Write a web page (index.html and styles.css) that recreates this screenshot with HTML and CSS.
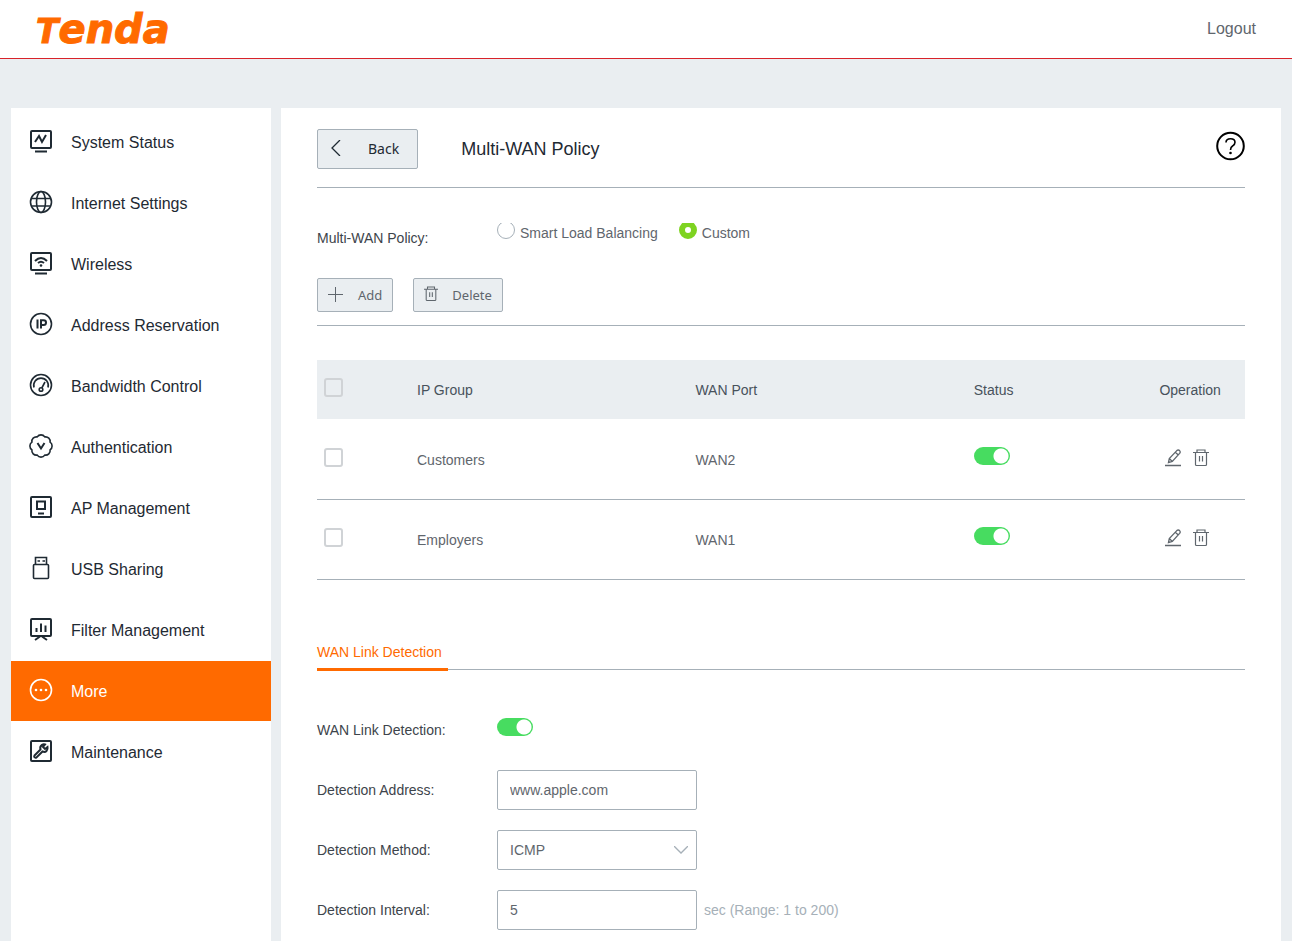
FILE: index.html
```
<!DOCTYPE html>
<html lang="en">
<head>
    <meta charset="UTF-8">
    <meta name="viewport" content="width=device-width, initial-scale=1.0">
    <title>Tenda</title>
    <link rel="stylesheet" href="styles.css">
</head>
<body>
    <!-- shared row icons -->
    <svg class="sprite" aria-hidden="true">
        <symbol id="trash" viewBox="0 0 16 18">
            <path d="M0 3.5H16M4 3.5V1H12V3.5M2.5 3.5V15.5Q2.5 16.5 3.5 16.5H12.5Q13.5 16.5 13.5 15.5V3.5M6.5 7V12.5M9.5 7V12.5" fill="none" stroke="currentColor" stroke-width="1.2"/>
        </symbol>
        <symbol id="edit" viewBox="0 0 16 18">
            <path d="M0 16.5H16M3.5 13.5L4.3 9.6L11.8 1.6Q13.2 .4 14.6 1.6Q15.8 3 14.6 4.4L7.3 12.4ZM10.4 3.2L13 5.8M4.3 9.6L7.3 12.4" fill="none" stroke="currentColor" stroke-width="1.3"/>
        </symbol>
    </svg>

    <header class="topbar">
        <a href="#" class="logo"><span class="logo-cap">T</span>enda</a>
        <a href="#" class="logout">Logout</a>
    </header>

    <div class="main">
        <nav class="sidebar">
            <a href="#" class="item">
                <svg viewBox="0 0 24 24"><rect x="2" y="2" width="20" height="17" rx="1"/><path d="M6 22.5H18M6 13L10 7L13 13L17 6"/></svg>
                System Status
            </a>
            <a href="#" class="item">
                <svg viewBox="0 0 24 24" class="thin"><circle cx="12" cy="12" r="10.5"/><ellipse cx="12" cy="12" rx="4.5" ry="10.5"/><path d="M2.5 8.5H21.5M2.5 16H21.5"/></svg>
                Internet Settings
            </a>
            <a href="#" class="item">
                <svg viewBox="0 0 24 24"><rect x="2" y="2" width="20" height="17" rx="1"/><path d="M6 22.5H18M6 10Q12 4 18 10M9 12Q12 9.5 15 12"/><circle cx="12" cy="14.5" r="1.3" class="dot"/></svg>
                Wireless
            </a>
            <a href="#" class="item">
                <svg viewBox="0 0 24 24"><circle cx="12" cy="12" r="10.5" class="thin"/><path d="M8.5 7.5V16.5M12 16.5V8.3H14.5Q17 8.3 17 10.5Q17 13 14.5 13H12"/></svg>
                Address Reservation
            </a>
            <a href="#" class="item">
                <svg viewBox="0 0 24 24" class="thin"><circle cx="12" cy="12" r="10.5"/><path d="M5 14.5A7.3 7.3 0 1 1 19 14.5M16 9L12.8 15"/><circle cx="12" cy="16.5" r="1.8"/></svg>
                Bandwidth Control
            </a>
            <a href="#" class="item">
                <svg viewBox="0 0 24 24" class="thin"><path d="M8.2 2.9A4.6 4.6 0 0 1 15.8 2.9A4.6 4.6 0 0 1 21.1 8.2A4.6 4.6 0 0 1 21.1 15.8A4.6 4.6 0 0 1 15.8 21.1A4.6 4.6 0 0 1 8.2 21.1A4.6 4.6 0 0 1 2.9 15.8A4.6 4.6 0 0 1 2.9 8.2A4.6 4.6 0 0 1 8.2 2.9Z"/><path d="M8.5 9L12 14.5L15.5 9" class="bold"/></svg>
                Authentication
            </a>
            <a href="#" class="item">
                <svg viewBox="0 0 24 24"><rect x="2" y="2" width="20" height="20" rx="1"/><rect x="8" y="6.5" width="8" height="7.5"/><path d="M9 18.5H15"/></svg>
                AP Management
            </a>
            <a href="#" class="item">
                <svg viewBox="0 0 24 24" class="thin"><rect x="4.5" y="8.5" width="15" height="14" rx="1"/><path d="M6.5 8.5V1.5H17.5V8.5M8.5 5H11M13.5 5H16"/></svg>
                USB Sharing
            </a>
            <a href="#" class="item">
                <svg viewBox="0 0 24 24"><rect x="2" y="2" width="20" height="17" rx="1"/><path d="M7.5 11V15M12 6.5V15M16.5 8.5V15M6 23L11 19.5M18 23L13 19.5"/></svg>
                Filter Management
            </a>
            <a href="#" class="item active">
                <svg viewBox="0 0 24 24" class="thin"><circle cx="12" cy="12" r="10.5"/><circle cx="7" cy="12" r="1.3" class="dot"/><circle cx="12" cy="12" r="1.3" class="dot"/><circle cx="17" cy="12" r="1.3" class="dot"/></svg>
                More
            </a>
            <a href="#" class="item">
                <svg viewBox="0 0 24 24"><rect x="2" y="2" width="20" height="20" rx="1"/><path d="M5.5 16.5L11.5 10.5Q10.5 7.5 13 5.8Q14.5 5 16 5.5L14 8L16 10L18.5 8Q19 10.5 17.5 12Q16 13.5 13.5 12.5L7.5 18.5Q6 19 5.3 18Q5 17.2 5.5 16.5Z"/></svg>
                Maintenance
            </a>
        </nav>

        <main class="content">
            <div class="title-bar">
                <button type="button" class="btn btn-back">
                    <svg viewBox="0 0 10 16" width="10" height="16"><path d="M9 0L1 8L9 16" fill="none" stroke="currentColor" stroke-width="1.3"/></svg>
                    Back
                </button>
                <h1>Multi-WAN Policy</h1>
                <button type="button" class="help" aria-label="Help">
                    <svg viewBox="0 0 30 30" width="30" height="30"><circle cx="15.5" cy="15" r="13.3" fill="none" stroke="currentColor" stroke-width="2"/><path d="M11 11.5Q11 7.8 15.5 7.8Q20 7.8 20 11.3Q20 13.3 17.8 14.8Q15.5 16.2 15.5 19" fill="none" stroke="currentColor" stroke-width="1.6"/><circle cx="15.5" cy="22" r="1.3"/></svg>
                </button>
            </div>

            <div class="policy" role="radiogroup" aria-labelledby="policy_label">
                <span class="name" id="policy_label">Multi-WAN Policy:</span>
                <label class="radio"><span class="clip"><input type="radio" name="policy"></span>Smart Load Balancing</label>
                <label class="radio"><span class="clip"><input type="radio" name="policy" checked></span>Custom</label>
            </div>

            <div class="actions">
                <button type="button" class="btn btn-small">
                    <svg viewBox="0 0 15 18" width="15" height="18"><path d="M0 9.5H15M7.5 2V17" fill="none" stroke="currentColor"/></svg>
                    Add
                </button>
                <button type="button" class="btn btn-small btn-delete">
                    <svg width="14" height="18"><use href="#trash"/></svg>
                    Delete
                </button>
            </div>

            <table>
                <thead>
                    <tr>
                        <th class="col-check"><input type="checkbox" class="check" aria-label="Select all"></th>
                        <th class="col-wide">IP Group</th>
                        <th class="col-wide">WAN Port</th>
                        <th class="col-status">Status</th>
                        <th>Operation</th>
                    </tr>
                </thead>
                <tbody>
                    <tr>
                        <td class="col-check"><input type="checkbox" class="check" aria-label="Select Customers"></td>
                        <td>Customers</td>
                        <td>WAN2</td>
                        <td class="raised"><input type="checkbox" class="toggle" aria-label="Customers status" checked></td>
                        <td>
                            <div class="ops">
                                <button type="button" aria-label="Edit"><svg width="16" height="18"><use href="#edit"/></svg></button>
                                <button type="button" aria-label="Delete"><svg width="16" height="18"><use href="#trash"/></svg></button>
                            </div>
                        </td>
                    </tr>
                    <tr>
                        <td class="col-check"><input type="checkbox" class="check" aria-label="Select Employers"></td>
                        <td>Employers</td>
                        <td>WAN1</td>
                        <td class="raised"><input type="checkbox" class="toggle" aria-label="Employers status" checked></td>
                        <td>
                            <div class="ops">
                                <button type="button" aria-label="Edit"><svg width="16" height="18"><use href="#edit"/></svg></button>
                                <button type="button" aria-label="Delete"><svg width="16" height="18"><use href="#trash"/></svg></button>
                            </div>
                        </td>
                    </tr>
                </tbody>
            </table>

            <div class="tabs">
                <h2>WAN Link Detection</h2>
            </div>

            <form class="form">
                <div class="row">
                    <label class="name" for="ipt_link">WAN Link Detection:</label>
                    <input type="checkbox" class="toggle" id="ipt_link" checked>
                </div>
                <div class="row">
                    <label class="name" for="ipt_address">Detection Address:</label>
                    <input type="text" class="field" id="ipt_address" value="www.apple.com">
                </div>
                <div class="row">
                    <label class="name" for="ipt_method">Detection Method:</label>
                    <div class="select">
                        <select class="field" id="ipt_method">
                            <option>ICMP</option>
                        </select>
                        <svg viewBox="0 0 14 8" width="14" height="8"><path d="M0 0L7 7L14 0" fill="none" stroke="currentColor" stroke-width="1.3"/></svg>
                    </div>
                </div>
                <div class="row">
                    <label class="name" for="ipt_interval">Detection Interval:</label>
                    <input type="text" class="field" id="ipt_interval" value="5">
                    <span class="hint">sec (Range: 1 to 200)</span>
                </div>
            </form>
        </main>
    </div>
</body>
</html>
```
FILE: styles.css
```
* {
    margin: 0;
    padding: 0;
    box-sizing: border-box;
}

body {
    display: flex;
    flex-direction: column;
    min-height: 100vh;
    font-family: "Liberation Sans", Arial, sans-serif;
    font-size: 14px;
    background-color: #eaeef1;
    color: #5f666d;
}
a {
    color: inherit;
    text-decoration: none;
}
button, input, select {
    font: inherit;
    color: inherit;
}
button {
    cursor: pointer;
}
.sprite {
    display: none;
}

/* top bar */
.topbar {
    display: flex;
    align-items: center;
    justify-content: space-between;
    height: 59px;
    padding: 0 36px;
    background-color: white;
    border-bottom: 1px solid #d8232a;
}
.logo {
    padding-top: 2px;
    font-family: "DejaVu Sans", sans-serif;
    font-size: 40px;
    font-weight: bold;
    font-style: italic;
    line-height: 56px;
    color: #ff6a00;
    -webkit-text-stroke: 1px #ff6a00;
}
.logo-cap {
    font-size: 33px;
}
.logout {
    font-size: 16px;
}

.main {
    display: flex;
    flex: 1;
    gap: 10px;
    width: 100%;
    max-width: 1292px;
    margin: 0 auto;
    padding: 49px 11px 0;
}

/* menu */
.sidebar {
    flex: none;
    width: 260px;
    padding-top: 4px;
    background-color: white;
}
.item {
    display: flex;
    align-items: center;
    gap: 18px;
    height: 60px;
    margin-bottom: 1px;
    padding: 2px 0 0 18px;
    font-size: 16px;
    color: #1f2a33;
}
.item svg {
    width: 24px;
    height: 24px;
    margin-bottom: 5px;
    fill: none;
    stroke: currentColor;
    stroke-width: 2;
}
.item .thin {
    stroke-width: 1.6;
}
.item .bold {
    stroke-width: 2;
}
.item .dot {
    fill: currentColor;
    stroke: none;
}
.item.active {
    background-color: #ff6a00;
    color: white;
}

/* page */
.content {
    flex: 1;
    min-width: 0;
    padding: 21px 36px 10px;
    background-color: white;
}
.title-bar {
    display: flex;
    align-items: center;
    padding-bottom: 18px;
    border-bottom: 1px solid #a6b0b8;
}
h1 {
    flex: 1;
    margin-left: 43px;
    font-size: 18px;
    font-weight: normal;
    color: #1f2a33;
}
.help {
    height: 30px;
    margin-bottom: 6px;
    border: none;
    background: none;
    color: black;
}
.btn {
    display: flex;
    align-items: center;
    border: 1px solid #a6b0b8;
    border-radius: 2px;
    background-color: #eaeef1;
    font-family: "Noto Sans", sans-serif;
}
.btn svg {
    margin-bottom: 3px;
}
.btn-back {
    gap: 27px;
    height: 40px;
    padding: 0 18px 2px 13px;
    color: #1f2a33;
}
.btn-back svg {
    margin-bottom: 0;
}
.btn-small {
    gap: 15px;
    height: 34px;
    padding: 0 10px;
    font-size: 13px;
}
.btn-delete {
    gap: 14px;
}
.name {
    flex: none;
    width: 180px;
    color: #3d444b;
}
.policy {
    display: flex;
    align-items: center;
    height: 90px;
    padding-top: 10px;
}
.radio {
    display: flex;
    align-items: center;
    gap: 5px;
    margin-right: 21px;
    padding-bottom: 10px;
}
.clip {
    width: 18px;
    height: 16px;
    margin-bottom: 4px;
    overflow: hidden;
}
.radio input {
    display: block;
    appearance: none;
    width: 18px;
    height: 18px;
    margin-top: -2px;
    border: 1px solid #a6b0b8;
    border-radius: 50%;
}
.radio input:checked {
    border: 6px solid #7ed321;
}
.actions {
    display: flex;
    gap: 20px;
    padding-bottom: 13px;
    border-bottom: 1px solid #a6b0b8;
}

/* policy table */
table {
    width: 100%;
    margin-top: 34px;
    border-collapse: separate;
    border-spacing: 0;
    table-layout: fixed;
}
th {
    height: 60px;
    border-bottom: 1px solid white;
    background-color: #eaeef1;
    background-clip: padding-box;
    font-weight: normal;
    text-align: left;
    color: #48525c;
}
td {
    height: 80px;
    border-bottom: 1px solid #a6b0b8;
}
.col-check {
    width: 100px;
    padding-left: 7px;
    padding-bottom: 4px;
}
.col-wide {
    width: 30%;
}
.col-status {
    width: 20%;
}
.raised {
    padding-bottom: 8px;
}
.check {
    display: block;
    appearance: none;
    width: 19px;
    height: 19px;
    border: 2px solid #d0d3d6;
    border-radius: 3px;
}
.toggle {
    display: block;
    appearance: none;
    width: 36px;
    height: 18px;
    border-radius: 9px;
    background: radial-gradient(circle at 27px 9px, white 7px, #47dc60 8px);
}
.ops {
    display: flex;
    gap: 12px;
    padding: 0 0 4px 6px;
}
.ops button {
    height: 18px;
    border: none;
    background: none;
}

/* link detection */
.tabs {
    display: flex;
    margin-top: 60px;
    background: linear-gradient(#a6b0b8, #a6b0b8) 0 29px / 100% 1px no-repeat;
}
h2 {
    height: 31px;
    padding-right: 6px;
    border-bottom: 3px solid #ff6a00;
    font-size: 14px;
    font-weight: normal;
    line-height: 24px;
    color: #ff6a00;
}
.form {
    display: flex;
    flex-direction: column;
    gap: 20px;
    margin-top: 39px;
}
.row {
    display: flex;
    align-items: center;
    height: 40px;
}
.row .toggle {
    margin-bottom: 6px;
}
.field {
    width: 200px;
    height: 40px;
    padding: 0 12px;
    border: 1px solid #a6b0b8;
    border-radius: 2px;
    background-color: white;
}
.select {
    position: relative;
}
.select .field {
    appearance: none;
}
.select svg {
    position: absolute;
    right: 9px;
    top: 16px;
    color: #a6b0b8;
    pointer-events: none;
}
.hint {
    margin-left: 7px;
    color: #a6b0b8;
}
```
